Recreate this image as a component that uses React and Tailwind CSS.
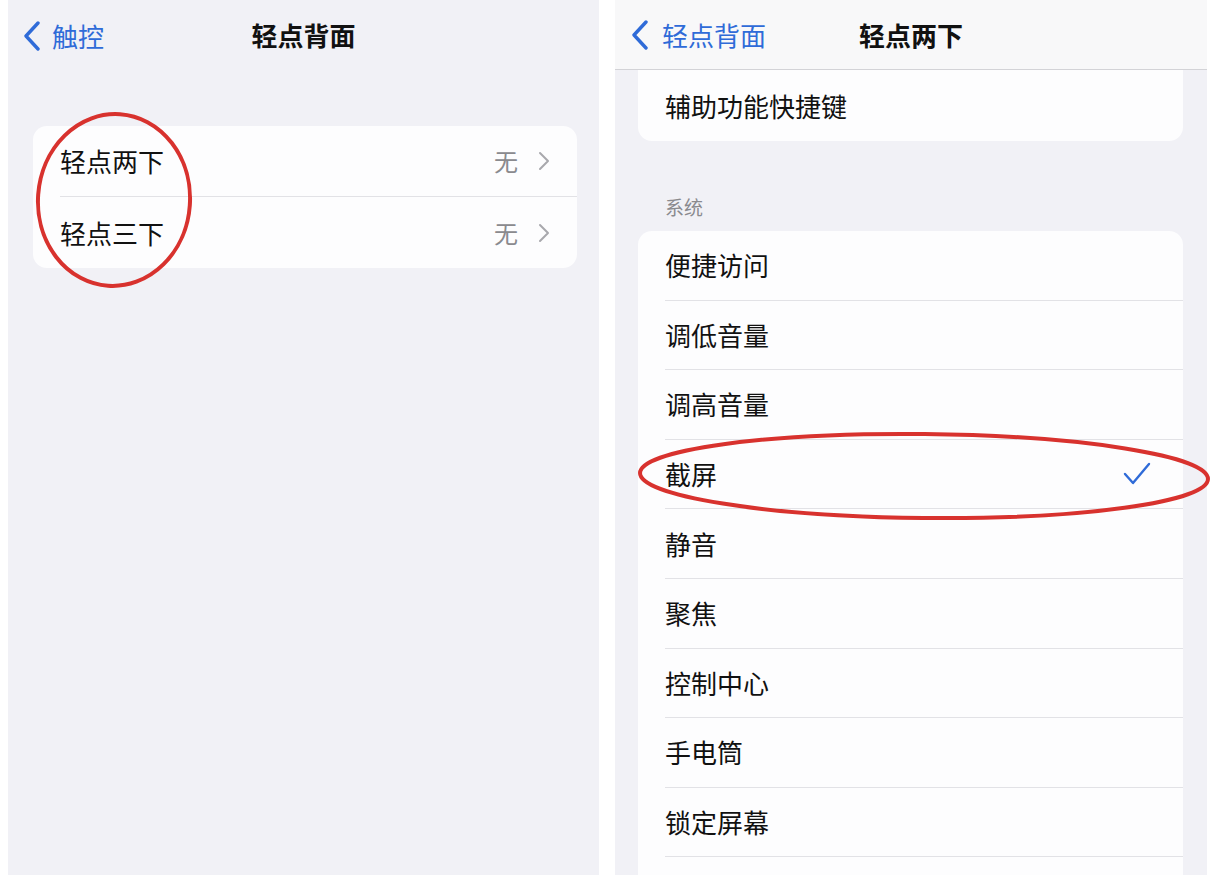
import React from "react"

const font = { fontFamily: '"Noto Sans CJK SC", "Noto Sans", sans-serif' }

function BackChevron() {
  return (
    <svg width="20" height="30" viewBox="0 0 20 30" className="shrink-0">
      <path d="M16 2 L4 15 L16 28" fill="none" stroke="#2f6bd8" strokeWidth="3.4" strokeLinecap="round" strokeLinejoin="round" />
    </svg>
  )
}

function RowChevron() {
  return (
    <svg width="12" height="20" viewBox="0 0 12 20">
      <path d="M2 2 L10 10 L2 18" fill="none" stroke="#a8a8ad" strokeWidth="2" strokeLinecap="round" strokeLinejoin="round" />
    </svg>
  )
}

function Check() {
  return (
    <svg width="28" height="24" viewBox="0 0 28 24">
      <path d="M2 12 L10 21 L26 2" fill="none" stroke="#2f6bd8" strokeWidth="2.4" strokeLinecap="round" strokeLinejoin="round" />
    </svg>
  )
}

// last row is scrolled mostly off screen, so it shows no label
const systemItems = ["便捷访问", "调低音量", "调高音量", "截屏", "静音", "聚焦", "控制中心", "手电筒", "锁定屏幕", ""]

export default function App() {
  return (
    <div className="relative w-[1212px] h-[875px] overflow-hidden bg-white flex" style={font}>
      {/* Left screen: 轻点背面 */}
      <div className="ml-[8px] w-[591px] h-full bg-[#f1f1f6] flex flex-col">
        <div className="relative h-[70px] flex items-center">
          <div className="absolute left-[14px] top-[21px] flex items-center gap-[10px]">
            <BackChevron />
            <span className="text-[26px] text-[#2f6bd8] leading-none">触控</span>
          </div>
          <div className="w-full text-center text-[26px] font-bold text-[#111] leading-none">轻点背面</div>
        </div>
        <div className="mt-[56px] ml-[25px] mr-[22px] bg-[#fdfdfe] rounded-[14px]">
          {["轻点两下", "轻点三下"].map((label, i) => (
            <div key={label} className="pl-[27px]">
              <div className={`h-[71px] flex items-center pr-[27px] ${i === 0 ? "border-b border-[#e2e2e6]" : ""}`}>
                <span className="flex-1 text-[26px] text-[#111] leading-none">{label}</span>
                <span className="text-[24px] text-[#8a8a8e] leading-none mr-[20px]">无</span>
                <RowChevron />
              </div>
            </div>
          ))}
        </div>
      </div>

      {/* Right screen: 轻点两下 */}
      <div className="ml-[16px] w-[592px] h-full bg-[#f1f1f6] flex flex-col">
        <div className="relative h-[70px] shrink-0 bg-[#f8f8f9] border-b border-[#d3d3d7] flex items-center">
          <div className="absolute left-[15px] top-[20px] flex items-center gap-[12px]">
            <BackChevron />
            <span className="text-[26px] text-[#2f6bd8] leading-none">轻点背面</span>
          </div>
          <div className="w-full text-center text-[26px] font-bold text-[#111] leading-none">轻点两下</div>
        </div>
        <div className="ml-[23px] mr-[24px] h-[71px] shrink-0 bg-[#fdfdfe] rounded-b-[14px] flex items-center pl-[27px]">
          <span className="text-[26px] text-[#111] leading-none">辅助功能快捷键</span>
        </div>
        <div className="ml-[50px] mt-[56px] mb-[15px] text-[19px] text-[#8a8a8e] leading-none">系统</div>
        <div className="ml-[23px] mr-[24px] bg-[#fdfdfe] rounded-t-[14px]">
          {systemItems.map((label, i) => (
            <div key={i} className="pl-[27px]">
              <div className="h-[69.6px] flex items-center pr-[32px] border-b border-[#e2e2e6]">
                <span className="flex-1 text-[26px] text-[#111] leading-none">{label}</span>
                {label === "截屏" && <Check />}
              </div>
            </div>
          ))}
        </div>
      </div>

      {/* Red annotation circles */}
      <svg className="absolute inset-0 pointer-events-none" width="1212" height="875" viewBox="0 0 1212 875">
        <ellipse cx="114" cy="200" rx="76" ry="86" fill="none" stroke="#d8322e" strokeWidth="4" transform="rotate(4 114 200)" />
        <ellipse cx="924" cy="476" rx="284" ry="42" fill="none" stroke="#d8322e" strokeWidth="4" transform="rotate(0.6 924 476)" />
      </svg>
    </div>
  )
}
